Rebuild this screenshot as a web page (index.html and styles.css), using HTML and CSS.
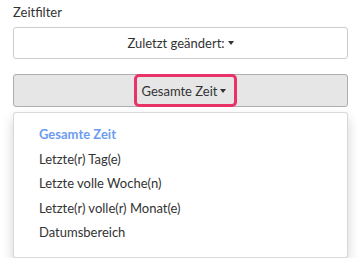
FILE: index.html
```html
<!DOCTYPE html>
<html>
<head>
    <title>Zeitfilter</title>
    <link rel="stylesheet" href="styles.css">
</head>
<body>
    <div class="filter">
        <div class="label">Zeitfilter</div>
        <button class="btn">Zuletzt geändert: <span class="caret"></span></button>
        <div class="dropdown">
            <button class="btn btn-active"><span class="highlight">Gesamte Zeit <span class="caret"></span></span></button>
            <ul class="menu">
                <li class="selected">Gesamte Zeit</li>
                <li>Letzte(r) Tag(e)</li>
                <li>Letzte volle Woche(n)</li>
                <li>Letzte(r) volle(r) Monat(e)</li>
                <li>Datumsbereich</li>
            </ul>
        </div>
    </div>
</body>
</html>
```

FILE: styles.css
```css
body {
    font-family: Lato, "Open Sans", sans-serif;
    font-size: 13px;
    color: #333;
    background-color: #fff;
    margin: 0;
}
.filter {
    width: 335px;
    padding: 5px 12px 0 13px;
}
.label {
    line-height: 15px;
    margin-bottom: 7px;
}
.btn {
    display: flex;
    justify-content: center;
    align-items: center;
    width: 100%;
    height: 32px;
    padding: 0;
    font-family: inherit;
    font-size: 13px;
    color: #333;
    background-color: #fff;
    border: 1px solid #ccc;
    border-radius: 3px;
}
.btn .caret {
    margin-left: 3px;
}
.caret {
    display: inline-block;
    width: 0;
    height: 0;
    border-top: 4px solid #333;
    border-left: 3px solid transparent;
    border-right: 3px solid transparent;
}
.dropdown {
    position: relative;
    margin-top: 15px;
}
.btn-active {
    height: 33px;
    background-color: #e6e6e6;
    border-color: #adadad;
}
.highlight {
    display: flex;
    align-items: center;
    height: 27px;
    margin: -1px 0 -1px 10px;
    padding: 0 8px 0 5px;
    border: 3px solid #e83268;
    border-radius: 5px;
}
.menu {
    list-style: none;
    margin: 5px 0 0;
    padding: 9px 0 12px;
    background-color: #fff;
    border: 1px solid rgba(0, 0, 0, 0.15);
    border-radius: 3px;
    box-shadow: 0 6px 12px rgba(0, 0, 0, 0.175);
}
.menu li {
    line-height: 24.5px;
    padding: 0 25px;
}
.menu .selected {
    color: #6c9cf0;
    font-weight: bold;
}
```
